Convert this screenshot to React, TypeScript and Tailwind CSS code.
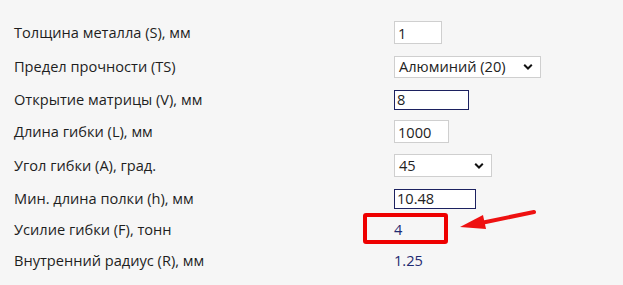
import React from "react";

const Chevron = () => (
  <svg
    className="pointer-events-none absolute right-[7px] top-1/2 -translate-y-1/2"
    width="10"
    height="7"
    viewBox="0 0 10 7"
  >
    <path d="M1.2 1.3 L5 5 L8.8 1.3" fill="none" stroke="#111" strokeWidth="2" />
  </svg>
);

function Row({
  label,
  h,
  children,
}: {
  label: string;
  h: string;
  children?: React.ReactNode;
}) {
  return (
    <div className={`flex items-center ${h}`}>
      <div className="w-[380px] shrink-0 text-[14.6px] text-[#1e1e1e]">{label}</div>
      <div className="relative flex items-center h-[20px]">{children}</div>
    </div>
  );
}

export default function App() {
  const inputBase =
    "box-border bg-white text-[14.6px] text-[#222] outline-none font-['Open_Sans',sans-serif]";
  return (
    <div className="w-[623px] h-[285px] bg-[#f6f6f6] font-['Open_Sans',sans-serif] pl-[14px] pt-[15px] relative overflow-hidden">
      <Row label="Толщина металла (S), мм" h="h-[35px]">
        <input
          readOnly
          value="1"
          className={`${inputBase} w-[48px] h-[23px] border border-[#cfcfcf] pl-[3px]`}
        />
      </Row>
      <Row label="Предел прочности (TS)" h="h-[34px]">
        <div className="relative w-[147px] h-[22px] border border-[#cfcfcf] bg-white flex items-center pl-[4px] text-[14.6px] text-[#222]">
          Алюминий (20)
          <Chevron />
        </div>
      </Row>
      <Row label="Открытие матрицы (V), мм" h="h-[32px]">
        <input
          readOnly
          value="8"
          className={`${inputBase} w-[75px] h-[20px] border border-[#1c2160] pl-[2px]`}
        />
      </Row>
      <Row label="Длина гибки (L), мм" h="h-[31px]">
        <input
          readOnly
          value="1000"
          className={`${inputBase} w-[55px] h-[23px] border border-[#cfcfcf] pl-[3px]`}
        />
      </Row>
      <Row label="Угол гибки (A), град." h="h-[37px]">
        <div className="relative w-[98px] h-[23px] border border-[#cfcfcf] bg-white flex items-center pl-[4px] text-[14.6px] text-[#222]">
          45
          <Chevron />
        </div>
      </Row>
      <Row label="Мин. длина полки (h), мм" h="h-[30px]">
        <input
          readOnly
          value="10.48"
          className={`${inputBase} w-[82px] h-[20px] border border-[#1c2160] pl-[2px]`}
        />
      </Row>
      <Row label="Усилие гибки (F), тонн" h="h-[32px]">
        <span className="text-[14.6px] text-[#1f2b72]">4</span>
        <div className="absolute left-[-31px] top-[-7px] w-[85px] h-[31px] border-[4px] border-[#ee0000] rounded-[3px]" />
        <svg
          className="absolute left-[65px] top-[-11px]"
          width="80"
          height="24"
          viewBox="0 0 80 24"
        >
          <path d="M75 3 L22 14" stroke="#ee1111" strokeWidth="4" strokeLinecap="round" fill="none" />
          <polygon points="1,18 24,6 27,20" fill="#ee1111" />
        </svg>
      </Row>
      <Row label="Внутренний радиус (R), мм" h="h-[30px]">
        <span className="text-[14.6px] text-[#1f2b72]">1.25</span>
      </Row>
    </div>
  );
}
